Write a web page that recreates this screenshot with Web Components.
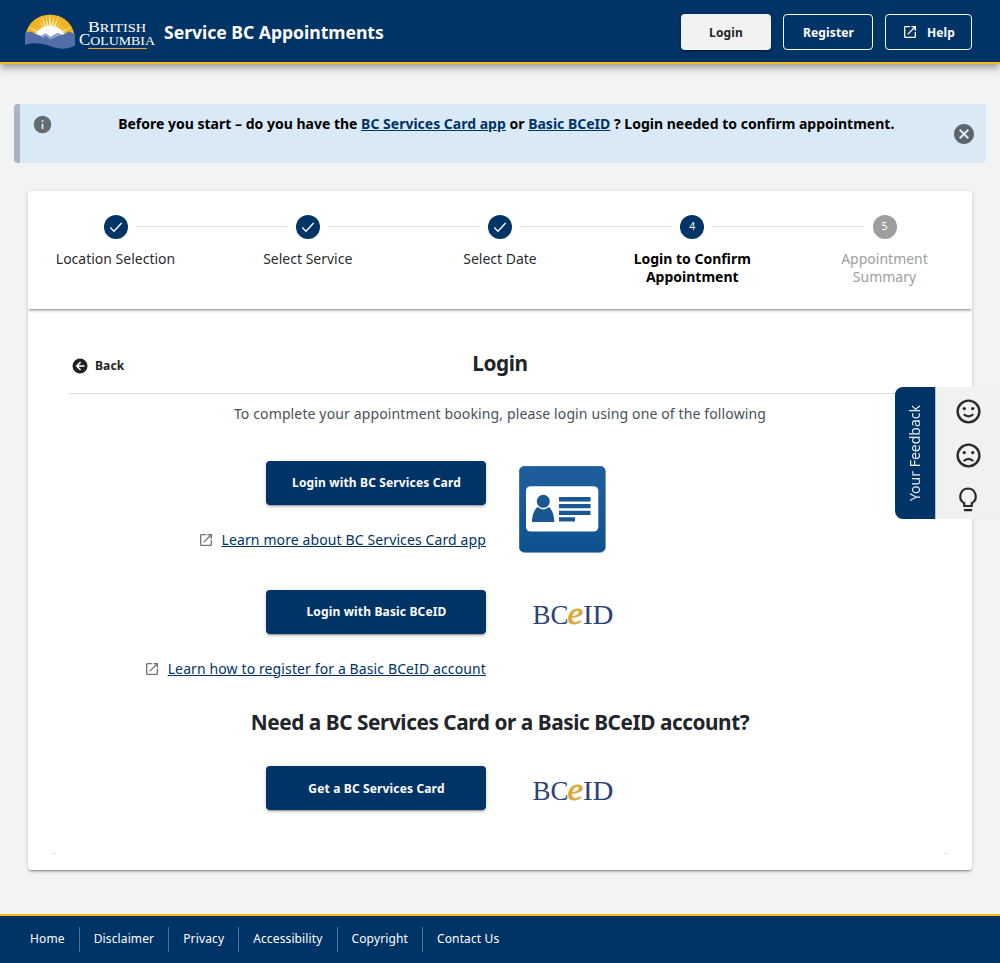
<!DOCTYPE html>
<html lang="en">
<head>
<meta charset="utf-8">
<title>Service BC Appointments</title>
<style>
html,body{margin:0;height:100%}
body{font-family:"Noto Sans","Liberation Sans",sans-serif;font-size:14px;color:rgba(0,0,0,.87);background:#f1f3f5}
</style>
</head>
<body>
<sb-app></sb-app>
<script>
const def=(name,css,html)=>customElements.define(name,class extends HTMLElement{
  constructor(){super();this.attachShadow({mode:"open"}).innerHTML=`<style>*{box-sizing:border-box}${css}</style>`+(typeof html==="function"?html(this):html);}
});
const paths={
  open:'<path d="M14,3V5H17.59L7.76,14.83L9.17,16.24L19,6.41V10H21V3M19,19H5V5H12V3H5C3.89,3 3,3.9 3,5V19A2,2 0 0,0 5,21H19A2,2 0 0,0 21,19V12H19V19Z"/>',
  info:'<path d="M13,9H11V7H13M13,17H11V11H13M12,2A10,10 0 0,0 2,12A10,10 0 0,0 12,22A10,10 0 0,0 22,12A10,10 0 0,0 12,2Z"/>',
  close:'<path d="M12,2C17.53,2 22,6.47 22,12C22,17.53 17.53,22 12,22C6.47,22 2,17.53 2,12C2,6.47 6.47,2 12,2M15.59,7L12,10.59L8.41,7L7,8.41L10.59,12L7,15.59L8.41,17L12,13.41L15.59,17L17,15.59L13.41,12L17,8.41L15.59,7Z"/>',
  check:'<path d="M3.500 12.800L9 18.200L20.500 6" fill="none" stroke="currentColor" stroke-width="2.100"/>',
  back:'<path d="M2,12A10,10 0 0,1 12,2A10,10 0 0,1 22,12A10,10 0 0,1 12,22A10,10 0 0,1 2,12M18,11H10L13.5,7.5L12.08,6.08L6.16,12L12.08,17.92L13.5,16.5L10,13H18V11Z"/>',
  happy:'<circle cx="12" cy="12" r="9" fill="none" stroke="currentColor" stroke-width="2"/><circle cx="8.5" cy="9.6" r="1.4"/><circle cx="15.5" cy="9.6" r="1.4"/><path d="M8 14.3Q12 17.7 16 14.3" fill="none" stroke="currentColor" stroke-width="1.8"/>',
  sad:'<circle cx="12" cy="12" r="9" fill="none" stroke="currentColor" stroke-width="2"/><circle cx="8.5" cy="9.6" r="1.4"/><circle cx="15.5" cy="9.6" r="1.4"/><path d="M8 16.6Q12 13 16 16.6" fill="none" stroke="currentColor" stroke-width="1.8"/>',
  bulb:'<path d="M12 3A6.800 6.800 0 0 0 8.800 15.700V18H15.200V15.700A6.800 6.800 0 0 0 12 3Z" fill="none" stroke="currentColor" stroke-width="1.900"/><path d="M8.500 20.500H15.500V22.500H8.500Z"/>'
};
def("sb-icon",":host{display:block;flex:none}svg{display:block;fill:currentColor;overflow:visible}",
  e=>`<svg width="${e.getAttribute("size")}" height="${e.getAttribute("size")}" viewBox="0 0 24 24">${paths[e.getAttribute("name")]}</svg>`);

def("sb-bc-logo",":host{display:block;width:132px;height:36px}svg{display:block;overflow:visible}",()=>{
  let rays="";
  for(let i=0;i<17;i++){const a=Math.PI*(i+.5)/17,c=Math.cos(a),s=Math.sin(a),l=i%2?22:25;
    rays+=`<path d="M${26-c*9+s*1.3} ${25-s*9+c*1.3}L${26-c*l} ${25-s*l}L${26-c*9-s*1.3} ${25-s*9-c*1.3}Z"/>`;}
  return `<svg width="132" height="36" viewBox="0 0 132 36">
<path d="M1.500 22C4 9 14 1.800 26 1.800S48 9 50.500 22Z" fill="#f0b323"/>
<g fill="#fff3c4">${rays}</g>
<path d="M10 26C12 17 18 13 26 13S40 17 42 26Z" fill="#fff"/>
<path d="M1 20L7 18.500L12 21L17 23L22 20.500L26 24L34 20L38 22L45 18.500L51 21V32.500C44 36.500 36 36.500 27 33.500C18 30.500 9 29 1 32Z" fill="#526ea8"/>
<path d="M17 23L22 20.500L26 24L34 20L38 22L34 23L30 25L26 26.500L22 23L18 25Z" fill="#8ea3cd"/>
<g fill="#fff" font-family="'Liberation Serif',serif">
<text x="64" y="18.700" font-size="15.500" textLength="58" lengthAdjust="spacingAndGlyphs">B<tspan font-size="12.500">RITISH</tspan></text>
<text x="55" y="31.900" font-size="16.500" textLength="76" lengthAdjust="spacingAndGlyphs">C<tspan font-size="13.500">OLUMBIA</tspan></text></g>
<rect x="64" y="35" width="59" height="1" fill="#e3a82b"/></svg>`;});

def("sb-button",`:host{display:flex;align-items:center;justify-content:center;height:36px;min-width:90px;border-radius:4px;font-size:12px;font-weight:700;letter-spacing:.15px;box-sizing:border-box;white-space:nowrap;background:#f2f2f2;color:#212529;box-shadow:0 3px 1px -2px rgba(0,0,0,.2),0 2px 2px rgba(0,0,0,.14),0 1px 5px rgba(0,0,0,.12)}
:host([outlined]){background:none;color:#fff;border:1px solid #fff;box-shadow:none;padding-left:1px}
:host([help]){min-width:87px;gap:9px;padding-left:0}
:host([primary]){width:220px;height:44px;background:#036;color:#fff;padding-left:1px}
:host([raised]){padding-bottom:2px}`,"<slot></slot>");

def("sb-header",`:host{display:flex;align-items:center;height:64px;background:#036;border-bottom:2px solid #fcba19;padding:0 28px 0 24px;box-sizing:border-box;color:#fff;box-shadow:0 3px 8px rgba(0,0,0,.42);position:relative;z-index:1}
h1{font-size:17.6px;font-weight:700;letter-spacing:-.03px;margin:0 auto 0 8px;line-height:24px;padding-top:2px}
nav{display:flex;gap:12px;padding-top:2px}`,
`<sb-bc-logo></sb-bc-logo><h1>Service BC Appointments</h1><nav><sb-button>Login</sb-button><sb-button outlined>Register</sb-button><sb-button outlined help><sb-icon name="open" size="16"></sb-icon>Help</sb-button></nav>`);

def("sb-alert",`:host{display:flex;height:59px;margin:40px 14px 0;background:#d9eaf6;border-left:6px solid #a9b5c0;border-radius:4px;box-sizing:border-box;padding:9px 10px 0 11.5px;color:#000}
.i{color:#636b71;padding-top:1px}.c{color:#5e666c;padding-top:9px}
p{flex:1;text-align:center;margin:0;padding-left:8px;font-size:14px;font-weight:700;letter-spacing:.005px;line-height:22px}
::slotted(a){color:#036}`,
`<sb-icon class="i" name="info" size="21"></sb-icon><p><slot></slot></p><sb-icon class="c" name="close" size="24"></sb-icon>`);

def("sb-step",`:host{display:flex;flex-direction:column;align-items:center;width:175px;flex:none;padding-top:24px;box-sizing:border-box}
.b{width:24px;height:24px;border-radius:50%;background:#036;color:#fff;display:grid;place-items:center;font-size:10.500px;line-height:22px;margin-bottom:11px}
.l{width:127px;text-align:center;line-height:18px;font-size:14px;white-space:nowrap}
:host([current]) .l{font-weight:700;color:#000;white-space:normal}
:host([future]) .b{background:#9e9e9e}:host([future]) .l{color:#9e9e9e;white-space:normal}`,
e=>`<div class="b">${e.hasAttribute("n")?`<span style="height:24px">${e.getAttribute("n")}</span>`:'<sb-icon name="check" size="16"></sb-icon>'}</div><div class="l"><slot></slot></div>`);

def("sb-stepper",`:host{display:flex;height:118px;background:#fff;box-shadow:0 3px 1px -2px rgba(0,0,0,.2),0 2px 2px rgba(0,0,0,.14),0 1px 5px rgba(0,0,0,.12);position:relative;border-radius:0}
i{flex:1;height:1px;background:#e0e0e0;margin:35px -67px 0}`,
`<sb-step>Location Selection</sb-step><i></i><sb-step>Select Service</sb-step><i></i><sb-step>Select Date</sb-step><i></i><sb-step current n="4">Login to Confirm Appointment</sb-step><i></i><sb-step future n="5">Appointment Summary</sb-step>`);

def("sb-learn",`:host{display:flex;align-items:center;justify-content:flex-end;gap:8px;height:22px;white-space:nowrap}
sb-icon{color:#757575;padding-top:2px}a{color:#036;text-decoration:underline;font-size:14px;letter-spacing:.115px}`,
`<sb-icon name="open" size="16"></sb-icon><a><slot></slot></a>`);

def("sb-card-image",`:host{display:block}svg{display:block}`,
`<svg width="87" height="87" viewBox="0 0 87 87"><defs><linearGradient id="g" x1="0" y1="0" x2="0" y2="1"><stop offset="0" stop-color="#1f5e9c"/><stop offset="1" stop-color="#0d528f"/></linearGradient></defs>
<rect x=".3" y=".3" width="86" height="86" rx="5" fill="url(#g)" stroke="#2a6296" stroke-width=".6"/>
<rect x="7" y="20.300" width="72.300" height="45.200" rx="4.500" fill="#fff"/>
<g fill="#18578f"><circle cx="24.300" cy="35.300" r="6.500"/><path d="M13 56C13 48.500 15.500 43.500 18.700 41Q24.300 45.800 29.900 41C33 43.500 35.300 48.500 35.300 56Z"/><path d="M40 31H71.500V35.500H40ZM40 38H71.500V42.300H40ZM40 44.700H71.500V49H40ZM40 51.300H56V55.500H40Z"/></g></svg>`);

def("sb-bceid",`:host{display:block}svg{display:block;overflow:visible}`,
`<svg width="84" height="42" viewBox="0 -6 84 42" font-family="'Liberation Serif',serif" font-size="27.500" fill="#2d4375"><text x="1.500" y="24" textLength="36" lengthAdjust="spacingAndGlyphs">BC</text><text x="36.500" y="24" font-size="32" font-style="italic" fill="#dba83a" stroke="#dba83a" stroke-width=".8" textLength="15.500" lengthAdjust="spacingAndGlyphs">e</text><text x="52" y="24" textLength="30.500" lengthAdjust="spacingAndGlyphs">ID</text></svg>`);

def("sb-login",`:host{display:block;padding:40px 40px 0;position:relative;height:561px;box-sizing:border-box}
header{display:grid;grid-template-columns:1fr auto 1fr;align-items:center;height:45px;border-bottom:1px solid #dcdcdc;padding:0 4px 14px}
.back{display:flex;gap:6px;align-items:center;font-size:12px;font-weight:700;letter-spacing:.12px;color:#212121;padding-top:3px}
h2{font-size:20.800px;font-weight:700;letter-spacing:-.44px;margin:0;text-align:center;color:#212529;line-height:30px}
header h2{margin-top:-2px}
p{margin:9px 0 0;text-align:center;color:#495057;font-size:14px;letter-spacing:.13px;line-height:22px}
.row{display:grid;grid-template-columns:418px 1fr;column-gap:33px;justify-items:start;height:44px}
.row>:first-child{justify-self:end}
.a{margin-top:36px}.b{margin-top:39px}.c{margin-top:29px}
sb-learn{width:418px}
.a sb-card-image{margin-top:5px}.row sb-bceid{margin:4px 0 0 12px}
.l1{margin-top:24px}.a+.l1{margin-top:24px;position:relative;top:-1px}.b+.l1{margin-top:23px}
footer{position:absolute;left:24px;right:24px;bottom:16px;display:flex;justify-content:space-between}
footer i{width:3px;height:2px;border-bottom:1px solid #dedede}`,
`<header><span class="back"><sb-icon name="back" size="18" style="margin:0 0 0 -1px"></sb-icon>Back</span><h2>Login</h2></header>
<p>To complete your appointment booking, please login using one of the following</p>
<div class="row a"><sb-button primary raised>Login with BC Services Card</sb-button><sb-card-image></sb-card-image></div>
<sb-learn class="l1">Learn more about BC Services Card app</sb-learn>
<div class="row b"><sb-button primary raised>Login with Basic BCeID</sb-button><sb-bceid></sb-bceid></div>
<sb-learn class="l1">Learn how to register for a Basic BCeID account</sb-learn>
<h2 style="margin-top:28px">Need a BC Services Card or a Basic BCeID account?</h2>
<div class="row c"><sb-button primary>Get a BC Services Card</sb-button><sb-bceid></sb-bceid></div>
<footer><i></i><i></i></footer>`);

def("sb-feedback",`:host{position:fixed;right:0;top:387px;display:flex;width:105.500px;height:132px;z-index:3}
.t{width:41.500px;background:#036;border-radius:8px 0 0 8px;color:#e6ebf0;display:grid;place-items:center;border-right:1px solid #b8c4d2}
.t span{writing-mode:vertical-rl;transform:rotate(180deg);font-size:14px}
.p{flex:1;background:#f1f1f1;display:grid;grid-template-rows:repeat(3,44px);place-items:center;padding-top:2px;align-content:start;color:#2b2b2b}`,
`<div class="t"><span>Your Feedback</span></div><div class="p"><sb-icon name="happy" size="29"></sb-icon><sb-icon name="sad" size="29"></sb-icon><sb-icon name="bulb" size="28"></sb-icon></div>`);

def("sb-footer",`:host{display:flex;height:49px;box-sizing:border-box;background:#036;border-top:2px solid #fcba19;padding:11px 16px 0;color:#fff;margin-top:auto}
a{height:25px;line-height:23px;padding:0 14px;font-size:12px;letter-spacing:.13px;border-right:1px solid #4d7099}a:last-child{border:0}`,
`<a>Home</a><a>Disclaimer</a><a>Privacy</a><a>Accessibility</a><a>Copyright</a><a>Contact Us</a>`);

def("sb-app",`:host{display:flex;flex-direction:column;height:963px;overflow:hidden;position:relative}
.shell{margin:28px 28px 0;border-radius:4px;box-shadow:0 3px 1px -2px rgba(0,0,0,.2),0 2px 2px rgba(0,0,0,.14),0 1px 5px rgba(0,0,0,.12)}
.card{background:#fff;border-radius:4px;overflow:hidden;height:679px}`,
`<sb-header></sb-header>
<sb-alert>Before you start – do you have the <a href="#">BC Services Card app</a> or <a href="#">Basic BCeID</a> ? Login needed to confirm appointment.</sb-alert>
<div class="shell"><div class="card"><sb-stepper></sb-stepper><sb-login></sb-login></div></div>
<sb-footer></sb-footer><sb-feedback></sb-feedback>`);
</script>
</body>
</html>
